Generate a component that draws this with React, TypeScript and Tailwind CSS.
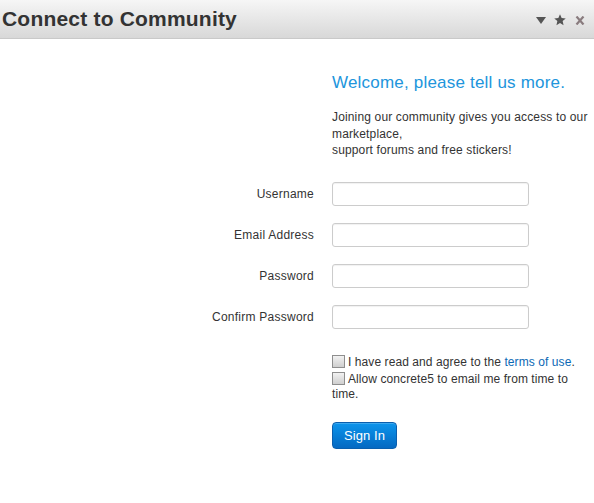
import React from "react";

const font = { fontFamily: '"Liberation Sans", Arial, sans-serif' };

function Checkbox() {
  return (
    <span className="inline-block w-[13px] h-[13px] align-middle mr-[3px] -mt-[2px] border border-[#8e8e8e] bg-gradient-to-b from-[#f2f2f2] to-[#cfcfcf] box-border" />
  );
}

function Row({ label }: { label: string }) {
  return (
    <>
      <div className="text-right text-[12px] leading-[24px] tracking-[0.25px] text-[#333]">{label}</div>
      <div>
        <input
          type="text"
          className="w-[197px] h-[24px] box-border border border-[#cccccc] rounded-[3px] bg-white shadow-[inset_0_1px_1px_rgba(0,0,0,0.06)] outline-none"
        />
      </div>
    </>
  );
}

export default function App() {
  return (
    <div className="w-[594px] h-[503px] bg-white overflow-hidden" style={font}>
      <div className="h-[39px] box-border border-b border-[#c9c9c9] bg-gradient-to-b from-[#f6f6f6] to-[#d8d8d8] flex items-center justify-between pl-[2px] pr-[9px]">
        <div className="text-[21px] leading-[24px] font-bold tracking-[0.2px] text-[#333]">Connect to Community</div>
        <div className="flex items-center pt-[2px]">
          <svg width="10" height="7" viewBox="0 0 10 7">
            <path d="M0 0 L10 0 L5 7 Z" fill="#555" />
          </svg>
          <svg width="12" height="12" viewBox="0 0 24 24" className="ml-[8px] -mt-[1px]">
            <path
              d="M12 0.5 L15.3 8 L23.5 8.8 L17.3 14.2 L19.1 22.5 L12 18.2 L4.9 22.5 L6.7 14.2 L0.5 8.8 L8.7 8 Z"
              fill="#555"
            />
          </svg>
          <svg width="10" height="9" viewBox="0 0 10 9" className="ml-[9px]">
            <path d="M1.5 0.5 L8.5 8.5 M8.5 0.5 L1.5 8.5" stroke="#8a7c7f" strokeWidth="2.2" />
          </svg>
        </div>
      </div>

      <div className="grid grid-cols-[314px_1fr] gap-x-[18px]">
        <div />
        <div className="pt-[34px] pr-[2px]">
          <h2 className="text-[17px] leading-[20px] tracking-[0.2px] text-[#2195dc]">Welcome, please tell us more.</h2>
          <p className="mt-[16px] text-[12px] leading-[16.5px] tracking-[0.15px] text-[#333]">
            Joining our community gives you access to our marketplace,
            <br />
            support forums and free stickers!
          </p>
        </div>
      </div>

      <div className="grid grid-cols-[314px_1fr] gap-x-[18px] gap-y-[17px] mt-[23px]">
        <Row label="Username" />
        <Row label="Email Address" />
        <Row label="Password" />
        <Row label="Confirm Password" />
      </div>

      <div className="grid grid-cols-[314px_1fr] gap-x-[18px] mt-[25px]">
        <div />
        <div className="text-[12px] leading-[16px] tracking-[0.08px] text-[#333] pr-[2px]">
          <div className="mb-[2px]">
            <Checkbox />I have read and agree to the{" "}
            <a className="text-[#0b69b5]">terms of use</a>.
          </div>
          <div className="leading-[15px]">
            <Checkbox />Allow concrete5 to email me from time to time.
          </div>
          <button className="mt-[20px] w-[65px] h-[27px] box-border rounded-[4px] border border-[#0a5fae] bg-gradient-to-b from-[#0d95ec] to-[#0569c2] text-white text-[13px] leading-[25px] text-center shadow-[inset_0_1px_0_rgba(255,255,255,0.2)]">
            Sign In
          </button>
        </div>
      </div>
    </div>
  );
}
